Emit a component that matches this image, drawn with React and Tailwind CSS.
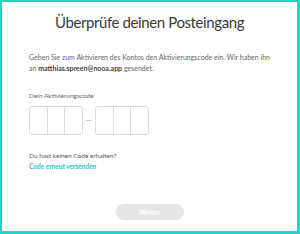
import React from "react";

const CodeGroup = () => (
  <div className="flex h-[29px] w-[54px] rounded-[3px] border border-[#dcdcdc]">
    <div className="flex-1 border-r border-[#dcdcdc]" />
    <div className="flex-1 border-r border-[#dcdcdc]" />
    <div className="flex-1" />
  </div>
);

const App = () => {
  return (
    <div className="h-[234px] w-[300px] border-2 border-r-[3px] border-b-[3px] border-[#2ccfc6] bg-white font-['Lato',sans-serif]">
      <div className="flex flex-col px-[27px]">
        <h1 className="mt-[8px] text-center text-[15px] font-normal leading-[24px] tracking-[-0.4px] text-[#3a3a3a]">
          Überprüfe deinen Posteingang
        </h1>

        {/* Intro text */}
        <p className="mt-[18px] text-[7px] leading-[11px] text-[#666]">
          Geben Sie zum Aktivieren des Kontos den Aktivierungscode ein. Wir haben ihn an{" "}
          <span className="font-bold text-[#444]">matthias.spreen@nooa.app</span> gesendet.
        </p>

        <label className="mt-[18px] text-[6.5px] leading-[8px] text-[#666]">Dein Aktivierungscode</label>
        <div className="mt-[6px] flex items-center gap-[3px]">
          <CodeGroup />
          <div className="h-px w-[6px] bg-[#ccc]" />
          <CodeGroup />
        </div>

        <p className="mt-[16px] text-[6.5px] leading-[9px] text-[#555]">Du hast keinen Code erhalten?</p>
        <button className="mt-[2px] self-start text-[6.5px] font-bold leading-[9px] text-[#2cc3c7]">
          Code erneut versenden
        </button>

        <div className="mt-[33px] flex justify-center">
          <button className="h-[16px] w-[68px] rounded-full bg-[#e6e6e6] text-[7px] font-bold text-white">
            Weiter
          </button>
        </div>
      </div>
    </div>
  );
};

export default App;
